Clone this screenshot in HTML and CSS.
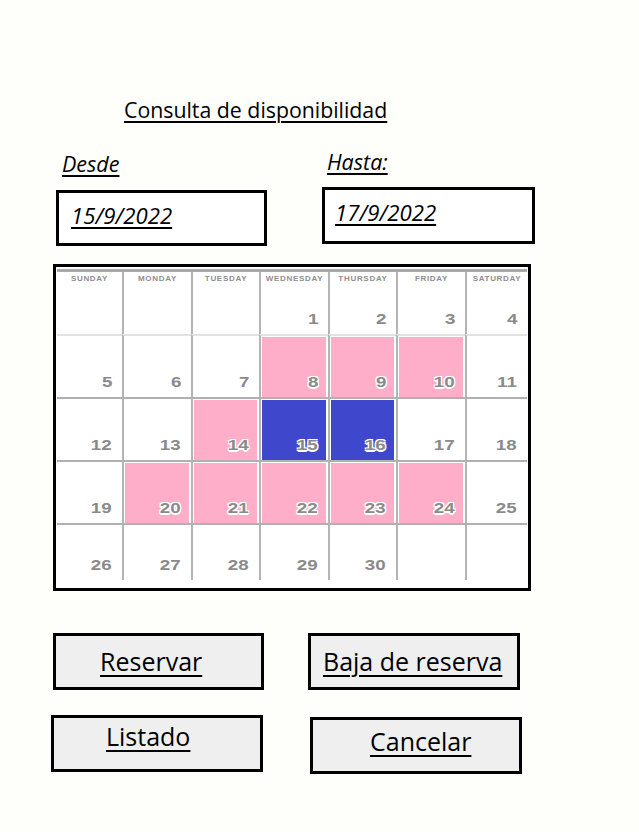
FILE: index.html
```html
<!DOCTYPE html>
<html lang="es">
<head>
<meta charset="utf-8">
<title>Consulta de disponibilidad</title>
<link rel="stylesheet" href="styles.css">
</head>
<body>
<main class="page">
  <h1 class="title">Consulta de disponibilidad</h1>

  <div class="range">
    <div class="field field-from">
      <span class="label label-from">Desde</span>
      <div class="box box-from"><span class="date">15/9/2022</span></div>
    </div>
    <div class="field field-to">
      <span class="label label-to">Hasta:</span>
      <div class="box box-to"><span class="date">17/9/2022</span></div>
    </div>
  </div>

  <div class="cal">
    <div class="cal-grid">
      <div class="cell"><span class="dn">SUNDAY</span><span class="num"></span></div>
      <div class="cell"><span class="dn">MONDAY</span><span class="num"></span></div>
      <div class="cell"><span class="dn">TUESDAY</span><span class="num"></span></div>
      <div class="cell"><span class="dn">WEDNESDAY</span><span class="num">1</span></div>
      <div class="cell"><span class="dn">THURSDAY</span><span class="num">2</span></div>
      <div class="cell"><span class="dn">FRIDAY</span><span class="num">3</span></div>
      <div class="cell"><span class="dn">SATURDAY</span><span class="num">4</span></div>

      <div class="cell row-2"><span class="num">5</span></div>
      <div class="cell row-2"><span class="num">6</span></div>
      <div class="cell row-2"><span class="num">7</span></div>
      <div class="cell row-2 busy"><span class="num">8</span></div>
      <div class="cell row-2 busy"><span class="num">9</span></div>
      <div class="cell row-2 busy"><span class="num">10</span></div>
      <div class="cell row-2"><span class="num">11</span></div>

      <div class="cell row-n"><span class="num">12</span></div>
      <div class="cell row-n"><span class="num">13</span></div>
      <div class="cell row-n busy"><span class="num">14</span></div>
      <div class="cell row-n picked"><span class="num">15</span></div>
      <div class="cell row-n picked"><span class="num">16</span></div>
      <div class="cell row-n"><span class="num">17</span></div>
      <div class="cell row-n"><span class="num">18</span></div>

      <div class="cell row-n"><span class="num">19</span></div>
      <div class="cell row-n busy"><span class="num">20</span></div>
      <div class="cell row-n busy"><span class="num">21</span></div>
      <div class="cell row-n busy"><span class="num">22</span></div>
      <div class="cell row-n busy"><span class="num">23</span></div>
      <div class="cell row-n busy"><span class="num">24</span></div>
      <div class="cell row-n"><span class="num">25</span></div>

      <div class="cell row-n"><span class="num">26</span></div>
      <div class="cell row-n"><span class="num">27</span></div>
      <div class="cell row-n"><span class="num">28</span></div>
      <div class="cell row-n"><span class="num">29</span></div>
      <div class="cell row-n"><span class="num">30</span></div>
      <div class="cell row-n"><span class="num"></span></div>
      <div class="cell row-n"><span class="num"></span></div>
    </div>
  </div>

  <div class="actions">
    <div class="btn-row btn-row-1">
      <div class="btn btn-reservar"><span class="btn-text">Reservar</span></div>
      <div class="btn btn-baja"><span class="btn-text">Baja de reserva</span></div>
    </div>
    <div class="btn-row btn-row-2">
      <div class="btn btn-listado"><span class="btn-text">Listado</span></div>
      <div class="btn btn-cancelar"><span class="btn-text">Cancelar</span></div>
    </div>
  </div>
</main>
</body>
</html>
```

FILE: styles.css
```css
* { box-sizing: border-box; }

html, body {
  margin: 0;
  padding: 0;
  background: #fefefa;
}

body {
  font-family: "Open Sans", "Noto Sans", sans-serif;
  color: #000;
}

.page {
  width: 639px;
  height: 832px;
  padding-top: 98px;
  display: flex;
  flex-direction: column;
  align-items: flex-start;
}

.title {
  margin: 0 0 0 124px;
  font-size: 21.3px;
  line-height: 24px;
  font-weight: 400;
  text-decoration: underline;
  text-decoration-thickness: 1.5px;
  text-underline-offset: 3px;
}

.range {
  margin-top: 28px;
  margin-left: 56px;
  display: flex;
  align-items: flex-start;
  gap: 55px;
}

.field {
  display: flex;
  flex-direction: column;
  align-items: flex-start;
}

.field-from { margin-top: 2px; }

.label {
  font-size: 21.5px;
  line-height: 24px;
  font-style: italic;
  text-decoration: underline;
  text-decoration-thickness: 2px;
  text-underline-offset: 3px;
}

.label-from { margin-left: 6px; }
.label-to { margin-left: 5px; }

.box {
  border: 3px solid #000;
  background: #fff;
  display: flex;
  align-items: flex-start;
}

.box-from {
  margin-top: 14px;
  width: 211px;
  height: 56px;
  padding: 10px 0 0 12px;
}

.box-to {
  margin-top: 13px;
  width: 213px;
  height: 57px;
  padding: 10px 0 0 10px;
}

.date {
  font-size: 22.2px;
  line-height: 26px;
  font-style: italic;
  text-decoration: underline;
  text-decoration-thickness: 2px;
  text-underline-offset: 3px;
}

/* calendar */
.cal {
  margin-top: 18px;
  margin-left: 53px;
  width: 478px;
  height: 327px;
  border: 3px solid #000;
  background: #fff;
  padding: 2px 1px 8px 1px;
}

.cal-grid {
  border-top: 3px solid #a8a8a8;
  display: grid;
  grid-template-columns: 65px 69px 68px 69px 68px 69px 62px;
  grid-template-rows: 62px 63px 63px 63px 57px;
  font-family: "Liberation Sans", Arial, sans-serif;
}

.cell {
  display: flex;
  flex-direction: column;
  justify-content: space-between;
  border-left: 2px solid #b4b4b4;
  padding: 2px 10px 8px 0;
}

.cell:nth-child(7n+1) { border-left: none; }

.row-2 { border-top: 2px solid #e2e2e2; }
.row-n { border-top: 2px solid #b0b0b0; }

.dn {
  align-self: stretch;
  text-align: center;
  margin-right: -10px;
  font-size: 8px;
  line-height: 9px;
  font-weight: 700;
  letter-spacing: 0.7px;
  color: #8e8e8e;
}

.num {
  margin-top: auto;
  align-self: flex-end;
  font-size: 15px;
  line-height: 15px;
  font-weight: 700;
  color: #8a8a8a;
  min-height: 15px;
  transform: scaleX(1.25);
  transform-origin: right bottom;
}

.busy {
  background: #ffaec9;
  box-shadow: inset 1px 1px 0 #fff, inset -2px 0 0 #fff;
}

.picked {
  background: #3f48cc;
  box-shadow: inset 1px 1px 0 #fff, inset -2px 0 0 #fff;
}

.busy .num,
.picked .num {
  text-shadow: 1px 1px 0 #fff, -1px -1px 0 #fff, 1px -1px 0 #fff, -1px 1px 0 #fff, 0 2px 0 #fff;
}

/* buttons */
.actions {
  margin-top: 42px;
  display: flex;
  flex-direction: column;
  gap: 25px;
}

.btn-row {
  display: flex;
  align-items: flex-start;
}

.btn {
  border: 3px solid #000;
  background: #efefef;
  height: 57px;
  display: flex;
  align-items: flex-start;
}

.btn-text {
  font-size: 25px;
  line-height: 31px;
  text-decoration: underline;
  text-decoration-thickness: 2px;
  text-underline-offset: 4px;
}

.btn-reservar {
  margin-left: 53px;
  width: 211px;
  padding: 10px 0 0 44px;
}

.btn-baja {
  margin-left: 44px;
  width: 212px;
  padding: 10px 0 0 12px;
}

.btn-listado {
  margin-left: 51px;
  width: 212px;
  padding: 3px 0 0 52px;
}

.btn-cancelar {
  margin-left: 47px;
  margin-top: 2px;
  width: 212px;
  padding: 6px 0 0 57px;
}
```
